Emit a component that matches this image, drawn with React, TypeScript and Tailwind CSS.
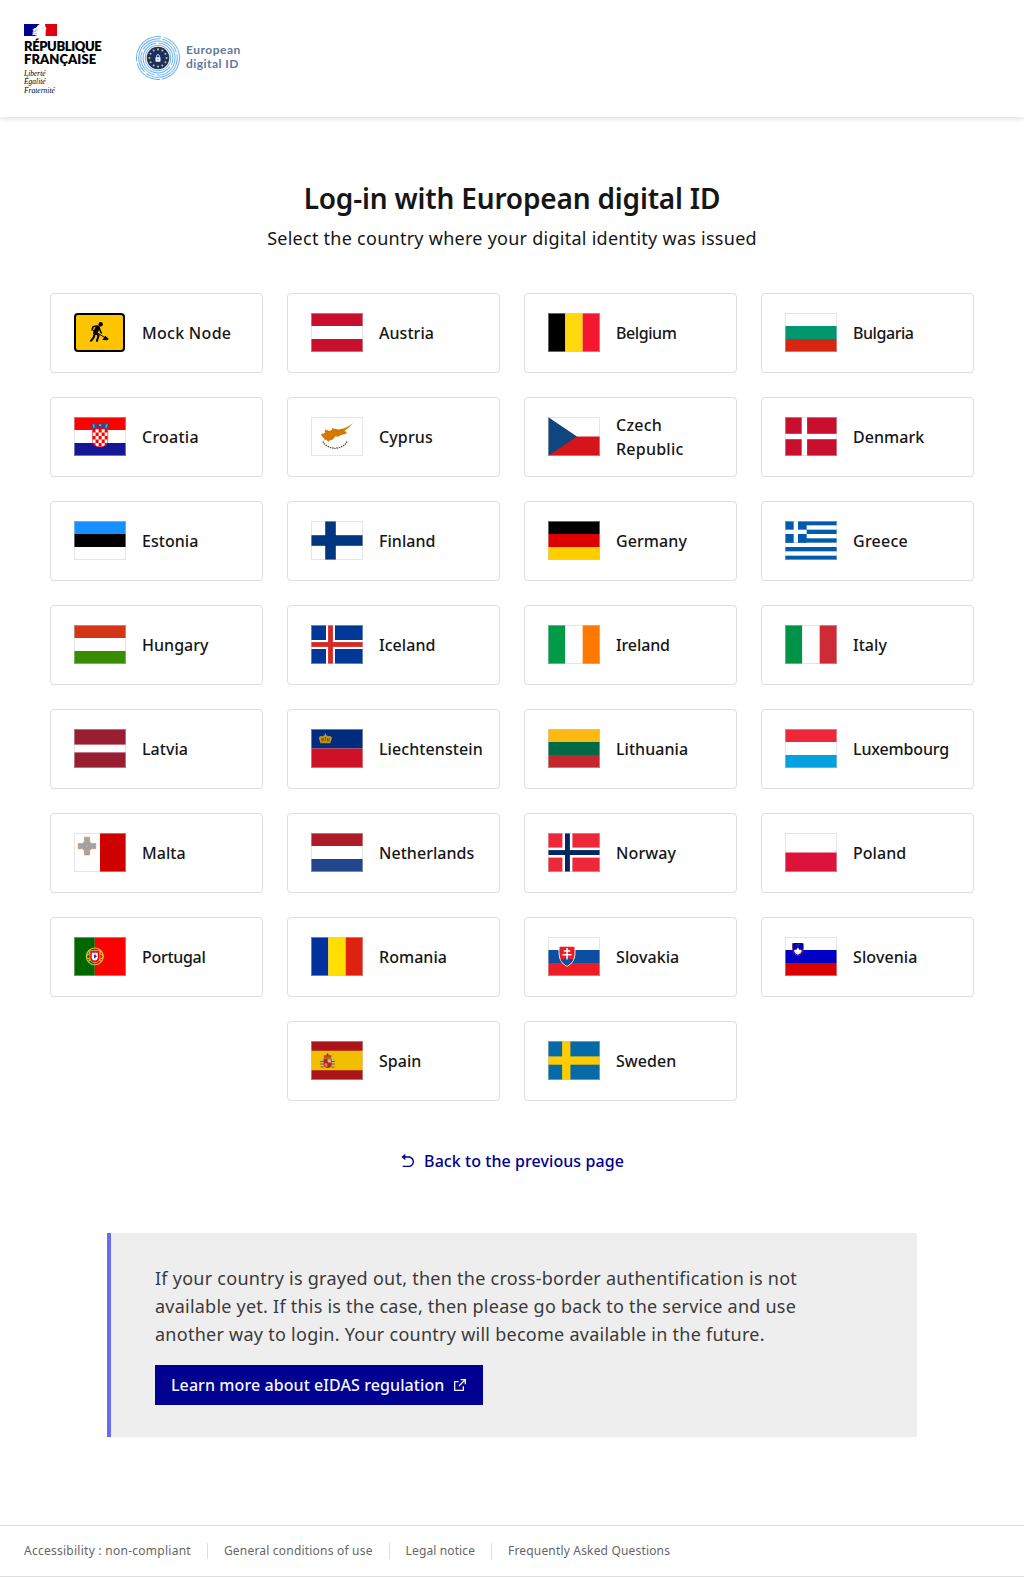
import type { ReactNode } from 'react';
import { RiArrowGoBackFill, RiExternalLinkLine } from 'react-icons/ri';

/* Flag building blocks, all drawn on a 52 x 39 canvas */
function Rows({ colors }: { colors: string[] }) {
  const h = 39 / colors.length;
  return (
    <>
      {colors.map((c, i) => (
        <rect key={i} x="0" y={i * h} width="52" height={h} fill={c} />
      ))}
    </>
  );
}

function Cols({ colors }: { colors: string[] }) {
  const w = 52 / colors.length;
  return (
    <>
      {colors.map((c, i) => (
        <rect key={i} x={i * w} y="0" width={w} height="39" fill={c} />
      ))}
    </>
  );
}

function Cross({ x, y, w, color }: { x: number; y: number; w: number; color: string }) {
  return (
    <>
      <rect x={x} y="0" width={w} height="39" fill={color} />
      <rect x="0" y={y} width="52" height={w} fill={color} />
    </>
  );
}

function Croatia() {
  const cells: ReactNode[] = [];
  for (let r = 0; r < 5; r++)
    for (let c = 0; c < 5; c++)
      if ((r + c) % 2 === 0)
        cells.push(<rect key={`${r}-${c}`} x={18.5 + c * 3.05} y={12 + r * 3.5} width="3.05" height="3.5" fill="#f00" />);
  return (
    <>
      <Rows colors={['#f00', '#fff', '#171796']} />
      <clipPath id="hr-shield">
        <path d="M18.5 12h15.2v11.5c0 4-3.4 6.3-7.6 6.3s-7.6-2.3-7.6-6.3z" />
      </clipPath>
      <g clipPath="url(#hr-shield)">
        <rect x="18" y="12" width="17" height="18" fill="#fff" />
        {cells}
      </g>
      <path d="M18.5 12h15.2v11.5c0 4-3.4 6.3-7.6 6.3s-7.6-2.3-7.6-6.3z" fill="none" stroke="#f00" strokeWidth=".6" />
      <path d="M18.6 12 17.2 7l3.3-.8 2 .6 3.6-1.3 3.6 1.3 2-.6 3.3.8-1.4 5-7.5-1.2z" fill="#1b4f9c" />
      <path d="m18.4 7.6 1.8-.5.9 3.3-1.7.5zM33.8 7.6l-1.8-.5-.9 3.3 1.7.5z" fill="#0ac0ef" />
      <path d="M21.7 7.8h1.4M21.9 9.6h1.4M29.1 7.8h1.4M29 9.6h1.3" stroke="#f00" strokeWidth=".8" />
      <path d="M25 7.4h2.2v1.6H25z" fill="#c9a34e" />
    </>
  );
}

function Portugal() {
  return (
    <>
      <rect width="20.8" height="39" fill="#060" />
      <rect x="20.8" width="31.2" height="39" fill="#f00" />
      <g fill="none" stroke="#d8d02a" strokeWidth="1.1">
        <circle cx="20.8" cy="19.4" r="8.4" />
        <ellipse cx="20.8" cy="19.4" rx="8.4" ry="3.4" />
        <path d="M14.5 14.5 27 24.3M14.5 24.3 27 14.5" />
      </g>
      <path d="M15.8 13.6h10v7.2c0 3-2.2 4.8-5 4.8s-5-1.8-5-4.8z" fill="#f00" stroke="#fff" strokeWidth=".5" />
      <path d="M17.8 15.8h6v4.6c0 1.9-1.3 3-3 3s-3-1.1-3-3z" fill="#fff" />
      <path d="M20.1 17.4h1.4v3.8h-1.4zM21.500 18.500h1v1.500h-1z" fill="#039" />
    </>
  );
}

function Spain() {
  return (
    <>
      <rect width="52" height="39" fill="#f1bf00" />
      <rect width="52" height="9.75" fill="#aa151b" />
      <rect y="29.25" width="52" height="9.75" fill="#aa151b" />
      <path d="M10.2 17h2v9h-2zM20.8 17h2v9h-2z" fill="#c9b896" />
      <path d="M9 20.5h4M9 23h4M20 20.5h4M20 23h4" stroke="#b5471b" strokeWidth="1" />
      <path d="M9.6 26h3.2M20.3 26h3.2" stroke="#68603a" strokeWidth="1" />
      <path d="M12.6 17.5h8v6.3c0 2-1.8 3.2-4 3.2s-4-1.2-4-3.2z" fill="#b3241c" />
      <path d="M16.6 18.3h3.2v3.4h-3.2z" fill="#e5b3a6" />
      <path d="M13.4 22.3h3V26c-1.8 0-3-1-3-2.4z" fill="#d98a1a" />
      <circle cx="16.6" cy="22" r="1" fill="#3b4f9c" />
      <path d="m13.2 17-.8-2.4 2.2-.7 2-1.2 2 1.2 2.2.7-.8 2.4z" fill="#b9531b" />
      <path d="M16.6 12.2v3" stroke="#8a2a15" strokeWidth=".9" />
    </>
  );
}

function Slovakia() {
  return (
    <>
      <Rows colors={['#fff', '#0b4ea2', '#ee1c25']} />
      <path d="M10.8 9h16.4c.6 8.5 1 16-8.2 20.7C9.8 25 10.2 17.5 10.8 9z" fill="#fff" />
      <clipPath id="sk-shield">
        <path d="M11.6 9.8h14.8c.5 7.8.7 14.7-7.4 19-8.1-4.3-7.9-11.2-7.4-19z" />
      </clipPath>
      <g clipPath="url(#sk-shield)">
        <rect x="10" y="9" width="18" height="21" fill="#ee1c25" />
        <path d="M10 24c2-2.5 4-2.5 5.5-1.2 1.2-2.4 5.8-2.4 7 0C24 21.5 26 21.5 28 24v6H10z" fill="#0b4ea2" />
      </g>
      <path d="M19 11v11.5M15.8 13.9h6.4M14.5 17.7h9" stroke="#fff" strokeWidth="1.5" />
    </>
  );
}

function Slovenia() {
  return (
    <>
      <Rows colors={['#fff', '#0000c4', '#d90000']} />
      <path d="M7.3 6.300c3.5-.5 8-.5 11.2 0 .2 5.200.2 10.500-5.600 12.400-5.800-1.900-5.800-7.200-5.600-12.400z" fill="#0000b0" />
      <path d="M7.400 9c.2 4.800.6 8 5.500 9.700 4.900-1.700 5.300-4.900 5.500-9.700" fill="none" stroke="#d02040" strokeWidth=".7" />
      <path d="m9 13.600 1.300-1.200.9.700 1.700-2.500 1.700 2.500.9-.7 1.300 1.200c-.3 2-1.900 3.600-3.900 4.200-2-.6-3.600-2.200-3.900-4.200z" fill="#fff" />
      <path d="M10 15.800c1 .6 2-.5 2.900.2s1.900-.5 2.900 0" stroke="#8090dd" strokeWidth=".4" fill="none" />
      <path d="M11.400 7.800h.8M13.600 7.800h.8M12.500 9h.8" stroke="#d8b84a" strokeWidth=".6" />
    </>
  );
}

function Cyprus() {
  return (
    <>
      <rect width="52" height="39" fill="#fff" />
      <path
        d="m10 18 1-1.600 1.500.4L14.500 15h-1l1-2.400 4 1.400 2.300-1 .2-1.800 2.500.6 4 .8 5-1 4-1.800 5.500-3.500-4.500 4.400-4.200 3.300 2.500 1-1 1.700-5.300 1.600-1.600 1.300h-3.600l-2.500 3-3.300.9-1.200 1.200-1.800-2-1.600.3-1.300-2z"
        fill="#d57800"
      />
      <path d="M12 24.500c1.500 3.700 6 6.200 11 6.700M36 24.500c-1.500 3.700-6 6.200-11 6.700" fill="none" stroke="#4e5b31" strokeWidth="1.300" strokeDasharray="1.500 .8" />
      <path d="M22.500 30.500 24 32l1.500-1.500" fill="none" stroke="#4e5b31" strokeWidth=".7" />
    </>
  );
}

function Malta() {
  return (
    <>
      <rect width="26" height="39" fill="#fff" />
      <rect x="26" width="26" height="39" fill="#cf0000" />
      <path
        d="M10.300 4.200h5.400v4.200l1.900 2 4.200-.1v5.400h-4.200l-2 2.100.1 4.200h-5.400v-4.200l-1.900-2.100-4.200.2v-5.400h4.200l2-2.100z"
        fill="#a3a3a3"
        stroke="#e08a4a"
        strokeWidth=".6"
      />
      <circle cx="13" cy="13" r="2.200" fill="#b0b0b0" stroke="#888" strokeWidth=".5" />
    </>
  );
}

function Liechtenstein() {
  return (
    <>
      <Rows colors={['#002b7f', '#ce1126']} />
      <path
        d="M9.600 14.600 7.900 9.300C8.300 6.800 10.500 6.400 12 7.500c.3-1.200 1.400-1.500 1.800-1.300V4.400h1.200v1.800c.4-.2 1.500.1 1.800 1.300 1.500-1.100 3.700-.7 4.100 1.800l-1.700 5.300z"
        fill="#c09a1e"
      />
      <path d="M9.800 14.400h9.200M10 9.300c1 .2 1.200 2 .9 3.200M18.800 9.300c-1 .2-1.200 2-.9 3.200M14.400 8v4.200M12.300 9v3.200M16.500 9v3.200" stroke="#3d320e" strokeWidth=".7" fill="none" />
    </>
  );
}

function Greece() {
  const s = 39 / 9;
  return (
    <>
      <rect width="52" height="39" fill="#005bae" />
      {[1, 3, 5, 7].map((i) => (
        <rect key={i} y={i * s} width="52" height={s} fill="#fff" />
      ))}
      <rect width={5 * s} height={5 * s} fill="#005bae" />
      <rect x={2 * s} width={s} height={5 * s} fill="#fff" />
      <rect y={2 * s} width={5 * s} height={s} fill="#fff" />
    </>
  );
}

/* Road-works sign used by the test node */
function MockSign() {
  return (
    <svg viewBox="0 0 51 39" className="mr-px h-[39px] w-[51px] shrink-0">
      <rect x="1" y="1" width="49" height="37" rx="3" fill="#ffc400" stroke="#000" strokeWidth="2" />
      <g fill="none" stroke="#000" strokeLinecap="round" strokeLinejoin="round">
        <path d="m23.800 14.500-2.600 5.300" strokeWidth="4.300" />
        <path d="m21.800 20 2.800 2.600-1.700 5.300" strokeWidth="2" />
        <path d="m20.600 21-.9 3.400-2.700 3.400" strokeWidth="2" />
        <path d="m22.500 13-3.500.7-.8 3.100" strokeWidth="1.600" />
        <path d="m25 14.500 1.300 3.600 1 1.800" strokeWidth="1.600" />
        <path d="m18.800 17 12.400 7.800" strokeWidth="1" />
      </g>
      <circle cx="26.700" cy="11.300" r="2.200" />
      <path d="m28.400 26.900 2.800-4.200 3.500 3.400-1.200 1.100z" />
    </svg>
  );
}

function Flag({ children }: { children: ReactNode }) {
  return (
    <svg viewBox="0 0 52 39" className="h-[39px] w-[52px] shrink-0">
      {children}
      <rect x=".5" y=".5" width="51" height="38" fill="none" stroke="rgb(203,203,203)" strokeOpacity=".5" />
    </svg>
  );
}

type Country = { name: string; flag?: ReactNode; tracking?: string };

const COUNTRIES: Country[] = [
  { name: 'Mock Node', tracking: 'tracking-[0.29px]' },
  { name: 'Austria', flag: <Rows colors={['#c8102e', '#fff', '#c8102e']} /> },
  { name: 'Belgium', flag: <Cols colors={['#000', '#ffd90c', '#f31830']} />, tracking: 'tracking-[-0.42px]' },
  { name: 'Bulgaria', flag: <Rows colors={['#fff', '#00966e', '#d62612']} />, tracking: 'tracking-[-0.45px]' },
  { name: 'Croatia', flag: <Croatia />, tracking: 'tracking-[0.24px]' },
  { name: 'Cyprus', flag: <Cyprus />, tracking: 'tracking-[0.12px]' },
  {
    name: 'Czech Republic',
    flag: (
      <>
        <Rows colors={['#fff', '#d7141a']} />
        <path d="M0 0v39l29-19.500z" fill="#11457e" />
      </>
    ),
    tracking: 'tracking-[0.24px]',
  },
  { name: 'Denmark', flag: <><rect width="52" height="39" fill="#c8102e" /><Cross x={16.7} y={16.8} w={5.4} color="#fff" /></> },
  { name: 'Estonia', flag: <Rows colors={['#1791ff', '#000', '#fff']} /> },
  { name: 'Finland', flag: <><rect width="52" height="39" fill="#fff" /><Cross x={14.2} y={14.2} w={10.6} color="#003580" /></> },
  { name: 'Germany', flag: <Rows colors={['#000', '#d00', '#ffce00']} />, tracking: 'tracking-[0.08px]' },
  { name: 'Greece', flag: <Greece />, tracking: 'tracking-[0.26px]' },
  { name: 'Hungary', flag: <Rows colors={['#d43516', '#fff', '#388d00']} /> },
  { name: 'Iceland', flag: <><rect width="52" height="39" fill="#003897" /><Cross x={15} y={15} w={9} color="#fff" /><Cross x={17.1} y={17.1} w={4.8} color="#d72828" /></> },
  { name: 'Ireland', flag: <Cols colors={['#009a49', '#fff', '#ff7900']} />, tracking: 'tracking-[-0.12px]' },
  { name: 'Italy', flag: <Cols colors={['#009246', '#fff', '#ce2b37']} /> },
  { name: 'Latvia', flag: <><rect width="52" height="39" fill="#981e32" /><rect y="15.600" width="52" height="7.800" fill="#fff" /></> },
  { name: 'Liechtenstein', flag: <Liechtenstein />, tracking: 'tracking-[0.08px]' },
  { name: 'Lithuania', flag: <Rows colors={['#fdb913', '#006a44', '#c1272d']} /> },
  { name: 'Luxembourg', flag: <Rows colors={['#ed2939', '#fff', '#00a1de']} />, tracking: 'tracking-[-0.15px]' },
  { name: 'Malta', flag: <Malta /> },
  { name: 'Netherlands', flag: <Rows colors={['#ae1c28', '#fff', '#21468b']} /> },
  { name: 'Norway', flag: <><rect width="52" height="39" fill="#ed2939" /><Cross x={14.4} y={14.6} w={10} color="#fff" /><Cross x={17} y={17.1} w={4.9} color="#002664" /></>, tracking: 'tracking-[0.1px]' },
  { name: 'Poland', flag: <Rows colors={['#fff', '#dc143c']} /> },
  { name: 'Portugal', flag: <Portugal />, tracking: 'tracking-[-0.3px]' },
  { name: 'Romania', flag: <Cols colors={['#00319c', '#ffde00', '#de2110']} /> },
  { name: 'Slovakia', flag: <Slovakia />, tracking: 'tracking-[0.1px]' },
  { name: 'Slovenia', flag: <Slovenia />, tracking: 'tracking-[0.1px]' },
  { name: 'Spain', flag: <Spain /> },
  { name: 'Sweden', flag: <><rect width="52" height="39" fill="#066aa7" /><Cross x={14.1} y={15.4} w={8.3} color="#fecc00" /></> },
];

function RepublicLogo() {
  return (
    <div className="w-[78px] text-black">
      <svg viewBox="0 0 33 12" className="block h-3 w-[33px]">
        <rect width="33" height="12" fill="#fff" />
        <path d="M0 0h15.800c-1.700.9-2.600 2-3.400 3.400-1.800.5-3.200 1.200-4.200 2.600l1.600-.2-1.400 1.600 1.500-.1-1.900 1.900 1.500 0-1.500 1.500c1.800.2 3.500.2 5.400 1.300H0z" fill="#000091" />
        <path d="M21 0H33v12H21.800l-.5-1.600.8-1.400-.8-.9.8-1.100-.5-1.300.9-1.200-1.200-1.900z" fill="#e1000f" />
        <path d="M9 8.400c1-.6 2-1 3-.8M9.500 10.200c1.200 0 2-.8 3.500-.7M11 6.300l2.500-.4" stroke="#6a6ac0" strokeWidth=".6" fill="none" />
        <path d="M18.500 4.400h1.200" stroke="#999" strokeWidth=".6" />
      </svg>
      <div className="mt-[4px] font-['Lato',sans-serif] text-[13px] leading-[13px] font-extrabold whitespace-nowrap">
        <div className="tracking-[-0.4px]">RÉPUBLIQUE</div>
        <div className="tracking-[0.05px]">FRANÇAISE</div>
      </div>
      <div className="mt-1 font-['Liberation_Serif',serif] text-[7.5px] leading-[8.4px] italic">
        <div>Liberté</div>
        <div>Égalité</div>
        <div>Fraternité</div>
      </div>
    </div>
  );
}

const STARS = Array.from({ length: 12 }, (_, i) => {
  const a = (i * Math.PI) / 6;
  return { x: 22 + 8.6 * Math.sin(a), y: 22 - 8.6 * Math.cos(a) };
});

function EuropeanIdLogo() {
  return (
    <div className="flex items-center gap-1.5">
      <svg viewBox="0 0 44 44" className="h-11 w-11">
        <g fill="none" stroke="#6cb2f2" strokeWidth="1">
          <circle cx="22" cy="22" r="21.500" strokeDasharray="52 2 30 2 40 3" transform="rotate(-60 22 22)" />
          <circle cx="22" cy="22" r="19.300" strokeDasharray="36 2 48 2 20 2" transform="rotate(20 22 22)" />
          <circle cx="22" cy="22" r="17.100" strokeDasharray="40 2 30 2" transform="rotate(-40 22 22)" />
          <circle cx="22" cy="22" r="14.900" strokeDasharray="50 2 30 2" transform="rotate(70 22 22)" />
          <circle cx="22" cy="22" r="12.800" />
        </g>
        <circle cx="22" cy="22" r="11.300" fill="#16306b" />
        {STARS.map((s, i) => (
          <circle key={i} cx={s.x} cy={s.y} r="1.050" fill="#e5bd2c" />
        ))}
        <rect x="19.500" y="21.200" width="5" height="4.500" rx=".4" fill="#fff" />
        <path d="M20.700 21.300v-1.400a1.300 1.300 0 0 1 2.600 0v1.400" fill="none" stroke="#fff" strokeWidth=".8" />
        <rect x="21.600" y="22.700" width=".8" height="1.500" fill="#16306b" />
      </svg>
      <div className="-mt-[3px] font-['Lato',sans-serif] text-[12px] leading-[13.5px] font-bold whitespace-nowrap text-[#61799b]">
        <div className="tracking-[0.5px]">European</div>
        <div className="tracking-[0.45px]">digital ID</div>
      </div>
    </div>
  );
}

const FOOTER_LINKS = [
  { label: 'Accessibility : non-compliant', style: 'tracking-[0.26px]' },
  { label: 'General conditions of use', style: 'tracking-[0.2px]' },
  { label: 'Legal notice', style: 'tracking-[0.12px]' },
  { label: 'Frequently Asked Questions', style: 'tracking-[0.17px]' },
];

export default function App() {
  return (
    <div className="flex min-h-[1577px] flex-col bg-white font-['Noto_Sans',sans-serif] text-[#161616]">
      <header className="flex h-[117px] items-start gap-[34px] px-6 pt-6 shadow-[0_1px_6px_rgba(0,0,18,0.16)]">
        <RepublicLogo />
        <div className="mt-3">
          <EuropeanIdLogo />
        </div>
      </header>

      <main className="flex flex-col items-center">
        <h1 className="mt-[63px] text-[28px] leading-9 font-semibold tracking-[-0.18px]">Log-in with European digital ID</h1>
        <p className="mt-2 text-[18px] leading-7 tracking-[0.26px]">Select the country where your digital identity was issued</p>

        <ul className="mt-[41px] flex w-[924px] flex-wrap justify-center gap-6">
          {COUNTRIES.map(({ name, flag, tracking }) => (
            <li key={name} className="flex h-20 w-[213px] items-center gap-4 rounded border border-[#ddd] pb-px pl-[23px]">
              {flag ? <Flag>{flag}</Flag> : <MockSign />}
              <span className={`min-w-0 flex-1 leading-6 font-medium ${tracking ?? 'tracking-[0.04px]'} ${name === 'Czech Republic' ? 'pr-8' : ''}`}>{name}</span>
            </li>
          ))}
        </ul>

        <a className="mt-12 flex h-6 items-center gap-2 font-medium text-[#000091]">
          <RiArrowGoBackFill className="size-4" />
          <span className="tracking-[0.07px]">Back to the previous page</span>
        </a>

        <section className="mt-[60px] h-[204px] w-[810px] border-l-4 border-[#6a6af4] bg-[#eee] pt-[31px] pl-11">
          <p className="w-[680px] text-[18px] leading-7 tracking-[0.26px] text-[#3a3a3a]">
            If your country is grayed out, then the cross-border authentification is not
            <br />
            <span className="tracking-[0.23px]">available yet. If this is the case, then please go back to the service and use</span>
            <br />
            another way to login. Your country will become available in the future.
          </p>
          <a className="mt-[17px] flex h-10 w-[328px] items-center gap-2 bg-[#000091] pl-4 font-medium text-[#f5f5fe]">
            <span className="tracking-[0.08px]">Learn more about eIDAS regulation</span>
            <RiExternalLinkLine className="size-4" />
          </a>
        </section>
      </main>

      <footer className="mt-[88px] flex h-[52px] items-center border-y border-[#ddd] pl-6 text-[12px] leading-5 text-[#666]">
        {FOOTER_LINKS.map(({ label, style }, i) => (
          <div key={label} className="flex items-center">
            {i > 0 && <span className="mx-4 h-4 w-px bg-[#ddd]" />}
            <a className={style}>{label}</a>
          </div>
        ))}
      </footer>
    </div>
  );
}
